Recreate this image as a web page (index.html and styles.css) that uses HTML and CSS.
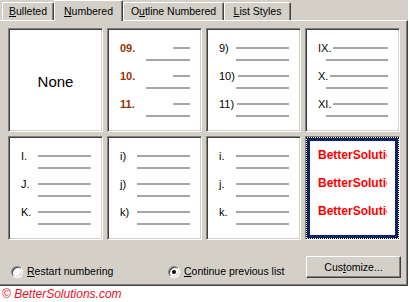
FILE: index.html
```html
<!DOCTYPE html>
<html lang="en">
<head>
    <meta charset="UTF-8">
    <title>Bullets and Numbering</title>
    <link rel="stylesheet" href="styles.css">
</head>
<body>
    <div class="dialog">
        <div class="tabs">
            <div class="tab tab-bulleted"><u>B</u>ulleted</div>
            <div class="tab tab-numbered active"><u>N</u>umbered</div>
            <div class="tab tab-outline">O<u>u</u>tline Numbered</div>
            <div class="tab tab-styles"><u>L</u>ist Styles</div>
        </div>
        <div class="panel">
            <div class="gallery">
                <div class="cell none">None</div>

                <div class="cell brown">
                    <div class="item"><div class="row"><span class="num">09.</span><span class="bar"></span></div><div class="row sub"><span class="bar"></span></div></div>
                    <div class="item"><div class="row"><span class="num">10.</span><span class="bar"></span></div><div class="row sub"><span class="bar"></span></div></div>
                    <div class="item"><div class="row"><span class="num">11.</span><span class="bar"></span></div><div class="row sub"><span class="bar"></span></div></div>
                </div>

                <div class="cell">
                    <div class="item"><div class="row"><span class="num">9)</span><span class="bar"></span></div><div class="row sub"><span class="bar"></span></div></div>
                    <div class="item"><div class="row"><span class="num">10)</span><span class="bar"></span></div><div class="row sub"><span class="bar"></span></div></div>
                    <div class="item"><div class="row"><span class="num">11)</span><span class="bar"></span></div><div class="row sub"><span class="bar"></span></div></div>
                </div>

                <div class="cell roman">
                    <div class="item"><div class="row"><span class="num">IX.</span><span class="bar"></span></div><div class="row sub"><span class="bar"></span></div></div>
                    <div class="item"><div class="row"><span class="num">X.</span><span class="bar"></span></div><div class="row sub"><span class="bar"></span></div></div>
                    <div class="item"><div class="row"><span class="num">XI.</span><span class="bar"></span></div><div class="row sub"><span class="bar"></span></div></div>
                </div>

                <div class="cell">
                    <div class="item"><div class="row"><span class="num">I.</span><span class="bar"></span></div><div class="row sub"><span class="bar"></span></div></div>
                    <div class="item"><div class="row"><span class="num">J.</span><span class="bar"></span></div><div class="row sub"><span class="bar"></span></div></div>
                    <div class="item"><div class="row"><span class="num">K.</span><span class="bar"></span></div><div class="row sub"><span class="bar"></span></div></div>
                </div>

                <div class="cell">
                    <div class="item"><div class="row"><span class="num">i)</span><span class="bar"></span></div><div class="row sub"><span class="bar"></span></div></div>
                    <div class="item"><div class="row"><span class="num">j)</span><span class="bar"></span></div><div class="row sub"><span class="bar"></span></div></div>
                    <div class="item"><div class="row"><span class="num">k)</span><span class="bar"></span></div><div class="row sub"><span class="bar"></span></div></div>
                </div>

                <div class="cell">
                    <div class="item"><div class="row"><span class="num">i.</span><span class="bar"></span></div><div class="row sub"><span class="bar"></span></div></div>
                    <div class="item"><div class="row"><span class="num">j.</span><span class="bar"></span></div><div class="row sub"><span class="bar"></span></div></div>
                    <div class="item"><div class="row"><span class="num">k.</span><span class="bar"></span></div><div class="row sub"><span class="bar"></span></div></div>
                </div>

                <div class="cell selected">
                    <div class="focus">
                        <div class="mark">
                            <div class="item"><div class="red">BetterSolutions</div></div>
                            <div class="item"><div class="red">BetterSolutions</div></div>
                            <div class="item"><div class="red">BetterSolutions</div></div>
                        </div>
                    </div>
                </div>
            </div>

            <div class="options">
                <div class="radio restart"><span class="circle"></span><u>R</u>estart numbering</div>
                <div class="radio continue"><span class="circle on"></span><u>C</u>ontinue previous list</div>
                <button class="btn">Cus<u>t</u>omize...</button>
            </div>
        </div>
    </div>
    <div class="credit">© BetterSolutions.com</div>
</body>
</html>
```

FILE: styles.css
```css
body {
    margin: 0;
    background: #fff;
    font-family: 'Liberation Sans', Arial, sans-serif;
    font-size: 10.5px;
    color: #000;
}
.dialog {
    width: 408px;
    background: #d4d0c8;
}
.tabs {
    display: flex;
    align-items: flex-end;
    height: 20px;
    padding-left: 2px;
}
.tab {
    box-sizing: border-box;
    height: 18px;
    border: 1px solid #fff;
    border-bottom: 0;
    border-right-color: #404040;
    box-shadow: inset -1px 0 #808080;
    border-radius: 2px 2px 0 0;
    text-align: center;
    line-height: 16px;
    background: #d4d0c8;
}
.tab.active {
    height: 21px;
    padding-top: 2px;
    margin-bottom: -1px;
    position: relative;
    z-index: 1;
}
.tab-bulleted { width: 52px; }
.tab-numbered { width: 69px; }
.tab-outline { width: 101px; }
.tab-styles { width: 67px; }
.panel {
    box-sizing: border-box;
    height: 266px;
    border-top: 1px solid #fff;
    border-right: 1px solid #404040;
    border-bottom: 1px solid #404040;
    box-shadow: inset -1px -1px #808080;
    padding: 7px 6px 0 8px;
}
.gallery {
    display: grid;
    grid-template-columns: repeat(4, 95px);
    grid-template-rows: repeat(2, 104px);
    gap: 4px;
}
.cell {
    box-sizing: border-box;
    background: #fff;
    border: 1px solid;
    border-color: #808080 #fff #fff #808080;
    box-shadow: inset 1px 1px #404040, inset -1px -1px #d4d0c8;
    padding: 13px 11px 0 12px;
    overflow: hidden;
}
.none {
    display: flex;
    align-items: center;
    justify-content: center;
    padding: 2px 0 0;
    font-size: 15px;
}
.item {
    height: 28px;
}
.row {
    display: flex;
    align-items: center;
    height: 12px;
}
.num {
    font-size: 11px;
    line-height: 12px;
    min-width: 14px;
    padding-right: 3px;
    white-space: nowrap;
}
.bar {
    flex: 1;
    height: 2px;
    background: #a6a6a6;
}
.sub .bar {
    margin-left: 17px;
}
.roman .num {
    min-width: 0;
    padding-right: 2px;
}
.roman .sub .bar {
    margin-left: 8px;
}
.brown .num {
    color: #993300;
    font-weight: bold;
}
.brown .row .bar {
    flex: none;
    width: 17px;
    margin-left: auto;
}
.brown .sub .bar {
    flex: 1;
    width: auto;
    margin-left: 26px;
}
.selected {
    padding: 0;
    box-shadow: none;
}
.focus {
    box-sizing: border-box;
    height: 100%;
    border: 1px dotted #000;
}
.mark {
    box-sizing: border-box;
    height: 100%;
    border: 3px solid #0a246a;
    padding: 8px 0 0 8px;
}
.mark .item {
    display: flex;
    align-items: flex-start;
}
.red {
    width: 69px;
    overflow: hidden;
    white-space: nowrap;
    color: #f00;
    font-weight: bold;
    font-size: 12px;
    line-height: 12px;
}
.options {
    display: flex;
    align-items: flex-end;
    margin-top: 16px;
}
.radio {
    display: flex;
    align-items: center;
    height: 13px;
    line-height: 13px;
    white-space: nowrap;
}
.restart {
    width: 157px;
    margin-left: 3px;
}
.continue {
    flex: 1;
}
.circle {
    box-sizing: border-box;
    width: 12px;
    height: 12px;
    margin-right: 4px;
    border-radius: 50%;
    border: 1px solid;
    border-color: #808080 #fff #fff #808080;
    box-shadow: inset 1px 1px #404040, inset -1px -1px #d4d0c8;
    background: #fff;
    display: flex;
    align-items: center;
    justify-content: center;
}
.circle.on::after {
    content: "";
    width: 4px;
    height: 4px;
    border-radius: 50%;
    background: #000;
}
.btn {
    box-sizing: border-box;
    width: 95px;
    height: 22px;
    padding: 0;
    font: inherit;
    color: #000;
    background: #d4d0c8;
    border: 1px solid;
    border-color: #fff #404040 #404040 #fff;
    box-shadow: inset -1px -1px #808080;
    border-radius: 0;
}
.credit {
    padding-left: 2px;
    line-height: 16px;
    font-size: 12px;
    font-style: italic;
    color: #e8121a;
}
```
